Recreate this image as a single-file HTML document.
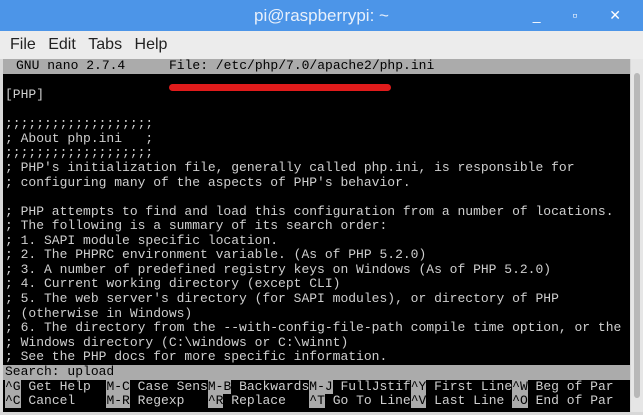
<!DOCTYPE html>
<html><head><style>
body{margin:0;width:643px;height:415px;overflow:hidden;background:#d8d8d8;font-family:"Liberation Sans",sans-serif;position:relative}
#title{position:absolute;left:0;top:0;width:643px;height:31px;background:#4c95e8;color:#e8f0fb;font-size:17px;text-align:center;line-height:31px}
#menu{position:absolute;left:0;top:31px;width:643px;height:28px;background:#ececec;font-size:16px;color:#222;line-height:28px}
#menu span{margin-left:10px;margin-right:-2px}
#term{position:absolute;left:3px;top:59px;width:627px;height:353px;background:#000}
pre{margin:0;position:absolute;left:2px;top:0;font-family:"Liberation Mono",monospace;font-size:13px;line-height:14.57px;color:#cfcfcf;letter-spacing:0}
.g{background:#ababab;color:#000}
#hdr{position:absolute;left:0;top:0;width:627px;height:14.5px;background:#ababab}
#sb{position:absolute;left:631px;top:59px;width:12px;height:353px;background:#e6e6e6}
#thumb{position:absolute;left:634px;top:73px;width:6px;height:325px;background:#b8b8b8;border-radius:3px}
</style></head><body>
<div id="title">pi@raspberrypi: ~<span style="position:absolute;right:8px;top:0;font-size:14px;color:#fff;letter-spacing:14px">_ ▫ ✕</span></div>
<div id="menu"><span>File</span> <span>Edit</span> <span>Tabs</span> <span>Help</span></div>
<div id="term">
<div id="hdr"></div>
<pre style="color:#000;left:13px">GNU nano 2.7.4</pre>
<pre style="color:#000;left:166px">File: /etc/php/7.0/apache2/php.ini</pre>
<div style="position:absolute;left:166px;top:25px;width:222px;height:7px;background:#e01b1b;border-radius:4px"></div>
<pre style="top:29.14px">[PHP]

;;;;;;;;;;;;;;;;;;;
; About php.ini   ;
;;;;;;;;;;;;;;;;;;;
; PHP's initialization file, generally called php.ini, is responsible for
; configuring many of the aspects of PHP's behavior.

; PHP attempts to find and load this configuration from a number of locations.
; The following is a summary of its search order:
; 1. SAPI module specific location.
; 2. The PHPRC environment variable. (As of PHP 5.2.0)
; 3. A number of predefined registry keys on Windows (As of PHP 5.2.0)
; 4. Current working directory (except CLI)
; 5. The web server's directory (for SAPI modules), or directory of PHP
; (otherwise in Windows)
; 6. The directory from the --with-config-file-path compile time option, or the
; Windows directory (C:\windows or C:\winnt)
; See the PHP docs for more specific information.</pre>
<div style="position:absolute;left:0;top:306px;width:627px;height:14.5px;background:#ababab"></div>
<pre style="top:306px;color:#000">Search: upload</pre>
<pre style="top:320.5px"><span class="g">^G</span> Get Help  <span class="g">M-C</span> Case Sens<span class="g">M-B</span> Backwards<span class="g">M-J</span> FullJstif<span class="g">^Y</span> First Line<span class="g">^W</span> Beg of Par
<span class="g">^C</span> Cancel    <span class="g">M-R</span> Regexp   <span class="g">^R</span> Replace   <span class="g">^T</span> Go To Line<span class="g">^V</span> Last Line <span class="g">^O</span> End of Par</pre>
</div>
<div id="sb"></div><div id="thumb"></div>
</body></html>
